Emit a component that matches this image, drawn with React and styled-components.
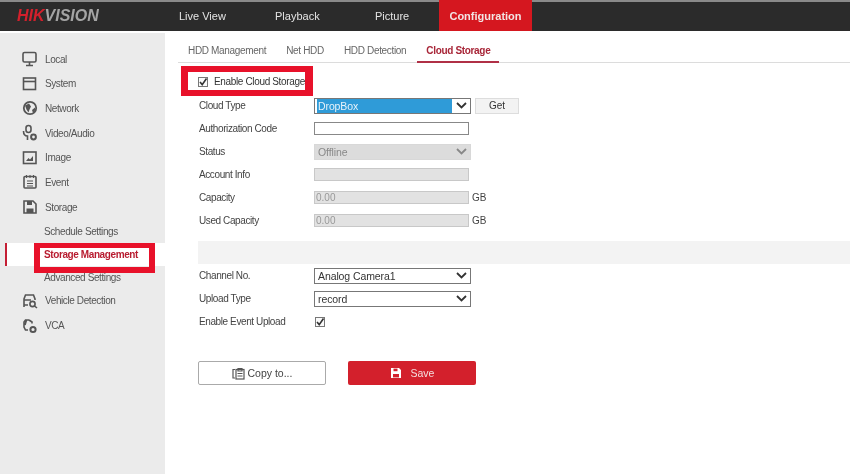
import React from 'react';
import styled, { createGlobalStyle } from 'styled-components';

const GlobalStyle = createGlobalStyle`
  html, body { margin: 0; padding: 0; background: #fff; }
  body { font-family: "Liberation Sans", Arial, sans-serif; }
`;

const Stroke = ({ children, size = 18 }) => (
  <svg width={size} height={size} viewBox="0 0 18 18" fill="none" stroke="#555" strokeWidth="1.6">
    {children}
  </svg>
);

const sideIcons = {
  local: (
    <Stroke>
      <rect x="2" y="2.5" width="13" height="9.5" rx="1.5" />
      <path d="M8.5 12v3M5 15.5h7" />
    </Stroke>
  ),
  system: (
    <Stroke>
      <rect x="2.5" y="3" width="12" height="11.5" />
      <path d="M2.5 6.5h12" />
    </Stroke>
  ),
  network: (
    <Stroke>
      <circle cx="9" cy="9" r="6.2" strokeWidth="1.8" />
      <path d="M4 6.5l4-2 2 3-1.5 3-1 3-2-3zM11 11l3-2.5v3l-2 2.5z" fill="#555" stroke="none" />
    </Stroke>
  ),
  video: (
    <Stroke>
      <rect x="5" y="1.5" width="5" height="7" rx="2.5" />
      <path d="M2.5 7c0 3.5 2 5 4 5v4" />
      <circle cx="12.5" cy="13" r="2.4" strokeWidth="2" />
    </Stroke>
  ),
  image: (
    <Stroke>
      <rect x="2.5" y="3" width="12.5" height="11.5" />
      <path d="M5 12l2.5-3 1.5 1.5L12 7v5z" fill="#555" stroke="none" />
    </Stroke>
  ),
  event: (
    <Stroke>
      <rect x="3" y="3.5" width="12" height="11.5" rx="1" />
      <path d="M5.5 2v3M9 2v3M12.5 2v3M6 8h6M6 10.5h6M6 13h6" strokeWidth="1.1" />
    </Stroke>
  ),
  storage: (
    <Stroke>
      <path d="M3 3h9l3 3v9H3z" />
      <path d="M6 3h5v4H6z" fill="#555" stroke="none" />
      <rect x="5.5" y="10.5" width="7" height="4.5" fill="#555" stroke="none" />
    </Stroke>
  ),
  vehicle: (
    <Stroke>
      <path d="M3 15V7l1.5-4h8L14 7v1M3 8h7M3 13h4" />
      <circle cx="11.5" cy="12" r="2.6" />
      <path d="M13.5 14l2.5 2" />
    </Stroke>
  ),
  vca: (
    <Stroke>
      <path d="M8 3H4.5L3 5v5l1.5 3H7M8 3l3 2v1.5M5.5 3L4 8" />
      <circle cx="12" cy="12.5" r="2.6" strokeWidth="2" />
    </Stroke>
  ),
};

const sideItems = [
  { key: 'local', label: 'Local' },
  { key: 'system', label: 'System' },
  { key: 'network', label: 'Network' },
  { key: 'video', label: 'Video/Audio' },
  { key: 'image', label: 'Image' },
  { key: 'event', label: 'Event' },
  { key: 'storage', label: 'Storage' },
  { label: 'Schedule Settings', sub: true },
  { label: 'Storage Management', sub: true, active: true },
  { label: 'Advanced Settings', sub: true },
  { key: 'vehicle', label: 'Vehicle Detection' },
  { key: 'vca', label: 'VCA' },
];

const navItems = [
  { label: 'Live View', width: 96 },
  { label: 'Playback', width: 100 },
  { label: 'Picture', width: 64 },
];

const tabItems = [
  { label: 'HDD Management' },
  { label: 'Net HDD' },
  { label: 'HDD Detection' },
  { label: 'Cloud Storage', active: true },
];

const Chevron = () => (
  <svg width="11" height="7" viewBox="0 0 11 7" fill="none" stroke="currentColor" strokeWidth="1.8">
    <path d="M1 1l4.5 4.5L10 1" />
  </svg>
);

const Tick = ({ size }) => (
  <CheckBox $size={size}>
    <svg width={size} height={size} viewBox="0 0 10 10" fill="none" stroke="#333" strokeWidth="1.6">
      <path d="M2 5l2.2 2.6L8.5 1.5" />
    </svg>
  </CheckBox>
);

const App = () => (
  <Page>
    <GlobalStyle />
    <TopBar>
      <Logo>
        <b>HIK</b>VISION
      </Logo>
      {navItems.map(item => (
        <NavItem key={item.label} $width={item.width}>
          {item.label}
        </NavItem>
      ))}
      <NavActive>Configuration</NavActive>
    </TopBar>

    <Body>
      <Sidebar>
        {sideItems.map(item => (
          <SideRow key={item.label} $active={item.active} $sub={item.sub}>
            {item.key && <SideIcon>{sideIcons[item.key]}</SideIcon>}
            {item.label}
          </SideRow>
        ))}
        <SideMark />
      </Sidebar>

      <Main>
        <Tabs>
          {tabItems.map(tab => (
            <Tab key={tab.label} $active={tab.active}>
              {tab.label}
            </Tab>
          ))}
        </Tabs>

        <EnableRow>
          <Tick size={10} />
          Enable Cloud Storage
          <EnableMark />
        </EnableRow>

        <FormRow>
          <Label>Cloud Type</Label>
          <Select $focus>
            <SelectText $focus>DropBox</SelectText>
            <Chevron />
          </Select>
          <GetButton>Get</GetButton>
        </FormRow>
        <FormRow>
          <Label>Authorization Code</Label>
          <Input />
        </FormRow>
        <FormRow>
          <Label>Status</Label>
          <Select $disabled>
            <SelectText>Offline</SelectText>
            <Chevron />
          </Select>
        </FormRow>
        <FormRow>
          <Label>Account Info</Label>
          <Input $disabled />
        </FormRow>
        <FormRow>
          <Label>Capacity</Label>
          <Input $disabled>0.00</Input>
          <Unit>GB</Unit>
        </FormRow>
        <FormRow>
          <Label>Used Capacity</Label>
          <Input $disabled>0.00</Input>
          <Unit>GB</Unit>
        </FormRow>

        <Band />

        <FormRow>
          <Label>Channel No.</Label>
          <Select>
            <SelectText>Analog Camera1</SelectText>
            <Chevron />
          </Select>
        </FormRow>
        <FormRow>
          <Label>Upload Type</Label>
          <Select>
            <SelectText>record</SelectText>
            <Chevron />
          </Select>
        </FormRow>
        <FormRow>
          <Label>Enable Event Upload</Label>
          <EventCheck>
            <Tick size={10} />
          </EventCheck>
        </FormRow>

        <Actions>
          <CopyButton>
            <svg width="13" height="13" viewBox="0 0 13 13" fill="none" stroke="#555" strokeWidth="1.2">
              <path d="M3 2.5H1v8.5h2" />
              <rect x="4" y="2.5" width="8" height="9.5" />
              <path d="M6 1.5h4v2.5H6zM5.5 6.5h5M5.5 9h5" />
            </svg>
            Copy to...
          </CopyButton>
          <SaveButton>
            <svg width="12" height="12" viewBox="0 0 12 12">
              <path d="M1 1h8l2 2v8H1z" fill="#fff" />
              <rect x="3.5" y="1.6" width="4" height="2.6" fill="#d3202c" />
              <rect x="3" y="7" width="6" height="3.4" fill="#d3202c" />
            </svg>
            Save
          </SaveButton>
        </Actions>
      </Main>
    </Body>
  </Page>
);

export default App;

const Page = styled.div`
  width: 850px;
  height: 474px;
  overflow: hidden;
  background: #fff;
  font-size: 10px;
  letter-spacing: -0.4px;
  color: #444;
  filter: blur(0.5px);
`;

const TopBar = styled.div`
  box-sizing: border-box;
  height: 31px;
  display: flex;
  align-items: stretch;
  padding-left: 17px;
  background: #2b2b2b;
  border-top: 2px solid #8a8a8a;
  letter-spacing: 0;
`;

const Logo = styled.div`
  width: 162px;
  line-height: 28px;
  font-size: 16px;
  font-weight: bold;
  font-style: italic;
  color: #a4a4a4;
  & > b {
    color: #d3202c;
  }
`;

const NavItem = styled.div`
  width: ${p => p.$width}px;
  line-height: 28px;
  font-size: 11px;
  color: #e4e4e4;
`;

const NavActive = styled.div`
  width: 93px;
  margin-top: -2px;
  text-align: center;
  line-height: 32px;
  font-size: 11px;
  font-weight: bold;
  color: #f2e4e4;
  background: #d5171f;
`;

const Body = styled.div`
  display: flex;
  height: 443px;
`;

const Sidebar = styled.div`
  position: relative;
  box-sizing: border-box;
  width: 165px;
  margin-top: 2px;
  padding-top: 13.7px;
  background: #ebebeb;
`;

const SideRow = styled.div`
  box-sizing: border-box;
  height: ${p => (p.$sub ? 23 : 24.7)}px;
  display: flex;
  align-items: center;
  padding-left: ${p => (p.$sub ? 44 : 21)}px;
  color: ${p => (p.$active ? '#b81c30' : '#555')};
  font-weight: ${p => (p.$active ? 'bold' : 'normal')};
  background: ${p => (p.$active ? '#fff' : 'transparent')};
  margin-left: ${p => (p.$active ? 5 : 0)}px;
  ${p => p.$active && 'padding-left: 37px; border-left: 2px solid #c41e34;'}
`;

const SideIcon = styled.span`
  display: flex;
  width: 24px;
  flex-shrink: 0;
`;

const SideMark = styled.div`
  position: absolute;
  left: 34px;
  top: 210px;
  width: 121px;
  height: 30px;
  box-sizing: border-box;
  border: 6px solid #e8112a;
  border-top-width: 5px;
`;

const Main = styled.div`
  flex: 1;
  padding-left: 13px;
`;

const Tabs = styled.div`
  height: 32px;
  box-sizing: border-box;
  display: flex;
  align-items: flex-end;
  padding-left: 1px;
  border-bottom: 1px solid #dcdcdc;
`;

const Tab = styled.div`
  box-sizing: border-box;
  height: 25px;
  margin-bottom: -1px;
  padding: 7px 9px 0;
  margin-right: 2px;
  white-space: nowrap;
  letter-spacing: -0.33px;
  color: ${p => (p.$active ? '#a82638' : '#666')};
  font-weight: ${p => (p.$active ? 'bold' : 'normal')};
  border-bottom: ${p => (p.$active ? '2px solid #b03046' : '2px solid transparent')};
`;

const EnableRow = styled.div`
  position: relative;
  box-sizing: border-box;
  height: 31px;
  padding: 6px 0 0 20px;
  display: flex;
  align-items: center;
  gap: 6px;
  letter-spacing: -0.35px;
  color: #333;
`;

const EnableMark = styled.div`
  position: absolute;
  left: 3px;
  top: 3px;
  width: 132px;
  height: 30px;
  box-sizing: border-box;
  border: 6px solid #e8112a;
  border-left-width: 7px;
  border-right-width: 8px;
`;

const CheckBox = styled.span`
  box-sizing: border-box;
  display: inline-flex;
  width: ${p => p.$size}px;
  height: ${p => p.$size}px;
  border: 1px solid #777;
  background: #fafafa;
  & > svg {
    margin: -1px;
  }
`;

const EventCheck = styled.span`
  display: flex;
  margin-left: 1px;
`;

const FormRow = styled.div`
  height: 23px;
  display: flex;
  align-items: center;
  padding-left: 21px;
`;

const Label = styled.div`
  width: 115px;
  flex-shrink: 0;
  color: #444;
`;

const Select = styled.div`
  box-sizing: border-box;
  width: 157px;
  height: 16px;
  display: flex;
  align-items: center;
  justify-content: space-between;
  padding: 0 3px 0 2px;
  border: 1px solid ${p => (p.$disabled ? '#d8d8d8' : '#777')};
  background: ${p => (p.$disabled ? '#dcdcdc' : '#fff')};
  color: ${p => (p.$disabled ? '#888' : '#333')};
`;

const SelectText = styled.span`
  flex: ${p => (p.$focus ? 1 : 'none')};
  margin-right: ${p => (p.$focus ? 4 : 0)}px;
  padding-left: 1px;
  line-height: 14px;
  color: ${p => (p.$focus ? '#e6f2fa' : 'inherit')};
  background: ${p => (p.$focus ? '#2f9bd8' : 'transparent')};
  font-size: 10.5px;
  letter-spacing: -0.1px;
`;

const Input = styled.div`
  box-sizing: border-box;
  width: 155px;
  height: 13px;
  padding-left: 1px;
  line-height: 11px;
  border: 1px solid ${p => (p.$disabled ? '#c8c8c8' : '#888')};
  background: ${p => (p.$disabled ? '#e2e2e2' : '#fff')};
  color: #999;
  letter-spacing: 0;
`;

const GetButton = styled.div`
  box-sizing: border-box;
  width: 44px;
  height: 16px;
  margin-left: 4px;
  text-align: center;
  line-height: 14px;
  border: 1px solid #ddd;
  background: #f3f3f3;
  color: #333;
  letter-spacing: 0;
`;

const Unit = styled.span`
  margin-left: 3px;
  color: #444;
  letter-spacing: 0;
`;

const Band = styled.div`
  height: 23px;
  margin: 9px 0 0 20px;
  background: #f3f3f3;
`;

const Actions = styled.div`
  display: flex;
  gap: 22px;
  margin: 28px 0 0 20px;
`;

const ActionButton = styled.div`
  box-sizing: border-box;
  width: 128px;
  height: 24px;
  display: flex;
  align-items: center;
  justify-content: center;
  gap: 3px;
  border-radius: 2px;
  font-size: 10.5px;
  letter-spacing: 0;
`;

const CopyButton = styled(ActionButton)`
  border: 1px solid #aaa;
  background: #fff;
  color: #444;
`;

const SaveButton = styled(ActionButton)`
  gap: 9px;
  background: #d3202c;
  color: #f4dede;
`;
